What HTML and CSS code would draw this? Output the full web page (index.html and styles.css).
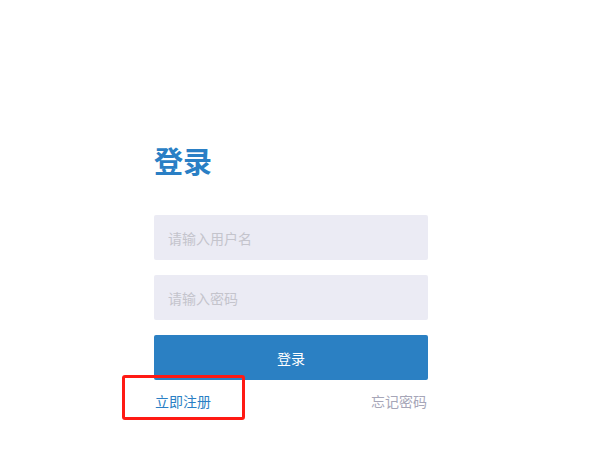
FILE: index.html
```html
<!DOCTYPE html>
<html lang="zh">
<head>
<meta charset="utf-8">
<title>登录</title>
<link rel="stylesheet" href="styles.css">
</head>
<body>
<div class="page">
  <form class="login">
    <h1 class="title">登录</h1>
    <input class="field" type="text" placeholder="请输入用户名">
    <input class="field" type="password" placeholder="请输入密码">
    <button class="submit" type="button">登录</button>
    <div class="links">
      <a class="register" href="#">立即注册</a>
      <a class="forgot" href="#">忘记密码</a>
      <span class="highlight"></span>
    </div>
  </form>
</div>
</body>
</html>
```

FILE: styles.css
```css
* { box-sizing: border-box; }
html, body {
  margin: 0;
  padding: 0;
  background: #ffffff;
  font-family: "Noto Sans CJK SC", "Noto Sans", sans-serif;
}
.page {
  padding: 140px 0 0 154px;
}
.login {
  width: 274px;
  display: flex;
  flex-direction: column;
}
.title {
  margin: 0 0 35px 0;
  font-size: 29px;
  line-height: 40px;
  font-weight: 700;
  color: #2a7fc5;
}
.field {
  display: block;
  width: 274px;
  height: 45px;
  margin: 0 0 15px 0;
  padding: 0 14px;
  border: none;
  border-radius: 2px;
  background: #ebebf4;
  font-family: inherit;
  font-size: 14px;
  color: #333;
  outline: none;
}
.field::placeholder {
  color: #c4c4cc;
}
.submit {
  display: block;
  width: 274px;
  height: 45px;
  margin: 0;
  border: none;
  border-radius: 2px;
  background: #2b80c3;
  color: #ffffff;
  font-family: inherit;
  font-size: 14px;
  cursor: pointer;
}
.links {
  position: relative;
  display: flex;
  justify-content: space-between;
  align-items: center;
  height: 42px;
  font-size: 14px;
}
.links a {
  text-decoration: none;
}
.register {
  color: #2a7fc5;
  padding-left: 1px;
}
.forgot {
  color: #a6a6b8;
  padding-right: 1px;
}
.highlight {
  position: absolute;
  left: -32px;
  top: -5px;
  width: 123px;
  height: 45px;
  border: 3px solid #ff1a14;
  border-radius: 3px;
  pointer-events: none;
}
```
